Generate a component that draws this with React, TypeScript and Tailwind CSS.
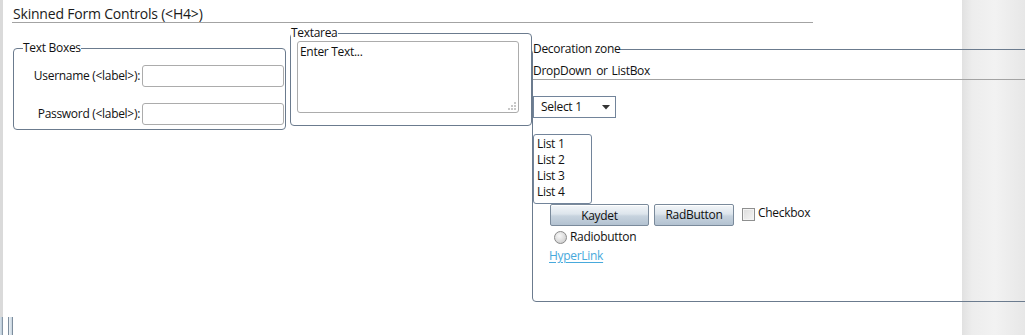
const segoe = "font-['Open_Sans','Noto_Sans',sans-serif]";

const GripDots = () => (
  <svg width="8" height="8" viewBox="0 0 8 8" className="absolute bottom-[3px] right-[3px]">
    {[
      [6, 0],
      [3, 3],
      [6, 3],
      [0, 6],
      [3, 6],
      [6, 6]
    ].map(([x, y], i) => (
      <rect key={i} x={x} y={y} width="2" height="2" fill="#c8c8c8" />
    ))}
  </svg>
);

const TextBoxes = () => (
  <fieldset className="ml-[1px] mt-[17px] w-[273px] rounded-[4px] border border-[#6b7b8e] px-0 pb-[4px] pt-[9px]">
    <legend className="ml-[9px] px-0 leading-[16px]">Text Boxes</legend>
    <div className="flex flex-col gap-[16px]">
      <div className="flex items-center justify-end gap-[2px] pr-[1px]">
        <label className="leading-[16px]">Username (&lt;label&gt;):</label>
        <input className="h-[22px] w-[142px] rounded-[3px] border border-[#acacac] bg-white outline-none" />
      </div>
      <div className="flex items-center justify-end gap-[2px] pr-[1px]">
        <label className="leading-[16px]">Password (&lt;label&gt;):</label>
        <input type="password" className="h-[22px] w-[142px] rounded-[3px] border border-[#acacac] bg-white outline-none" />
      </div>
    </div>
  </fieldset>
);

const TextareaBox = () => (
  <fieldset className="ml-[4px] mt-[2px] w-[242px] rounded-[4px] border border-[#6b7b8e] px-0 pb-[12px] pl-[6px]">
    <legend className="-ml-[6px] px-0 leading-[16px]">Textarea</legend>
    <div className="relative h-[72px] w-[222px]">
      <textarea
        defaultValue="Enter Text..."
        className="h-full w-full resize-none rounded-[3px] border border-[#acacac] bg-white px-[2px] pt-[2px] pb-0 leading-[16px] tracking-[-0.3px] outline-none"
      />
      <GripDots />
    </div>
  </fieldset>
);

const buttonSkin =
  'h-[22px] rounded-[2px] border border-[#7a8a9b] bg-[linear-gradient(#f3f6f9,#dde5ec_45%,#c7d3de_55%,#b3c2d1)] leading-[16px] tracking-[-0.3px] shadow-[inset_0_1px_0_#fff]';

const Decoration = () => (
  <fieldset className="mt-[18px] w-[620px] shrink-0 rounded-[4px] border border-[#6b7b8e] px-0 pb-[37px]">
    <legend className="px-0 leading-[16px]">Decoration zone</legend>
    <div className="border-b border-[#a3a3a3] pt-[6px] leading-[16px]">
      DropDown <span className="ml-[2px]">or</span> <span className="ml-[1px]">ListBox</span>
    </div>

    <div className="mt-[16px] flex h-[22px] w-[83px] items-center justify-between border border-[#72849a] pl-[7px] pr-[5px] leading-[16px]">
      <span>Select 1</span>
      <svg width="8" height="5" viewBox="0 0 8 5">
        <path d="M0 0h8L4 4.5z" fill="#333" />
      </svg>
    </div>

    <div className="mt-[16px] h-[70px] w-[59px] rounded-[3px] border border-[#72849a] pl-[3px] pt-[1px] leading-[16px]">
      <div>List 1</div>
      <div>List 2</div>
      <div>List 3</div>
      <div>List 4</div>
    </div>

    <div className="flex items-start">
      <button className={`ml-[17px] w-[99px] pt-[1px] ${buttonSkin}`}>Kaydet</button>
      <button className={`ml-[5px] w-[80px] ${buttonSkin}`}>RadButton</button>
      <div className="ml-[8px] mt-[4px] flex items-center gap-[3px]">
        <span className="h-[13px] w-[13px] border border-[#8e8f8f] bg-[linear-gradient(135deg,#dcdcdc,#f6f6f6)] shadow-[inset_0_0_0_1px_#f4f4f4]" />
        <span className="-mt-[3px] leading-[16px]">Checkbox</span>
      </div>
    </div>

    <div className="ml-[21px] mt-[3px] flex items-center gap-[3px]">
      <span className="h-[13px] w-[13px] rounded-full border border-[#8a8a8a] bg-[radial-gradient(circle_at_40%_35%,#f8f8f8,#d4d4d4_70%,#c4c4c4)]" />
      <span className="leading-[16px]">Radiobutton</span>
    </div>

    <a href="#" className="ml-[16px] mt-[3px] block w-fit leading-[16px] text-[#47a9dc] underline underline-offset-[2px]">
      HyperLink
    </a>
  </fieldset>
);

export default function App() {
  return (
    <div
      className={`${segoe} flex h-[335px] w-full flex-col overflow-hidden bg-[linear-gradient(to_right,#ffffff_962px,#e1e1e1_962px,#ededed_972px,#f2f2f2_995px,#e7e7e7_1025px)] text-[12px] tracking-[-0.3px] text-[#111]`}
    >
      <div className="flex min-h-0 flex-1">
        <div className="w-[3px] shrink-0 bg-[#dadada]" />
        <div className="flex flex-col pl-[9px]">
          <h4 className="w-[801px] border-b border-[#a3a3a3] pl-[1px] pt-[5px] text-[14px] font-normal leading-[17px] tracking-[-0.2px] text-[#1a1a1a]">
            Skinned Form Controls (&lt;H4&gt;)
          </h4>
          <div className="flex items-start">
            <TextBoxes />
            <TextareaBox />
            <Decoration />
          </div>
        </div>
      </div>
      <div className="flex h-[18px] shrink-0 gap-[5px]">
        <div className="w-[3px] border-r border-[#8595a5] bg-[linear-gradient(to_right,#d8e2ea,#b7c7d4)]" />
        <div className="w-[5px] border-x border-[#7d8d9d] bg-[linear-gradient(to_right,#eef3f7,#c7d4df)]" />
      </div>
    </div>
  );
}
